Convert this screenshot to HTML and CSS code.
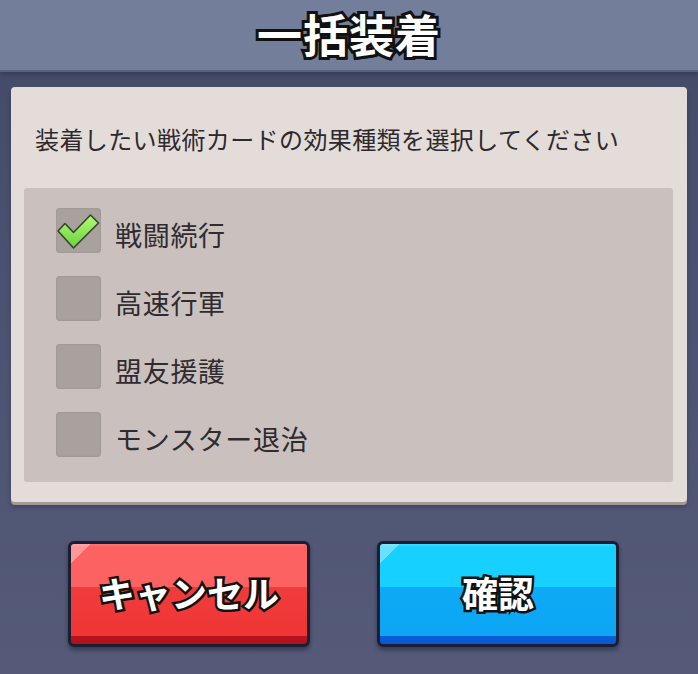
FILE: index.html
```html
<!DOCTYPE html>
<html lang="ja">
<head>
<meta charset="utf-8">
<title>一括装着</title>
<link rel="stylesheet" href="styles.css">
</head>
<body>
<div class="screen">
  <header class="header">
    <h1 class="title">一括装着</h1>
  </header>
  <section class="panel">
    <p class="desc">装着したい戦術カードの効果種類を選択してください</p>
    <div class="options">
      <div class="option">
        <span class="box">
          <svg class="check" viewBox="0 0 45 45" width="45" height="45">
            <defs>
              <linearGradient id="g" x1="0" y1="0" x2="0" y2="1">
                <stop offset="0" stop-color="#b4fa78"/>
                <stop offset="1" stop-color="#68d23c"/>
              </linearGradient>
            </defs>
            <polygon points="2,23 9,15.5 17.5,24.5 34.5,7 42.5,15 17.5,40" fill="url(#g)" stroke="#34452a" stroke-width="1.6" stroke-linejoin="round"/>
          </svg>
        </span>
        <span class="label">戦闘続行</span>
      </div>
      <div class="option">
        <span class="box"></span>
        <span class="label">高速行軍</span>
      </div>
      <div class="option">
        <span class="box"></span>
        <span class="label">盟友援護</span>
      </div>
      <div class="option">
        <span class="box"></span>
        <span class="label">モンスター退治</span>
      </div>
    </div>
  </section>
  <div class="actions">
    <button class="btn btn-cancel"><span class="btn-text">キャンセル</span></button>
    <button class="btn btn-ok"><span class="btn-text">確認</span></button>
  </div>
</div>
</body>
</html>
```

FILE: styles.css
```css
* { box-sizing: border-box; }
html, body {
  margin: 0;
  padding: 0;
}
body {
  width: 698px;
  height: 674px;
  overflow: hidden;
  font-family: "Noto Sans CJK JP", "Noto Sans", sans-serif;
  background: linear-gradient(180deg, #434a67 0%, #4b5271 40%, #545a77 100%);
}
.screen {
  width: 698px;
  height: 674px;
  display: flex;
  flex-direction: column;
}
.header {
  height: 70px;
  background: #737e9b;
  display: flex;
  justify-content: center;
  align-items: center;
  box-shadow: 0 2px 0 #59617e, 0 5px 4px rgba(40, 44, 66, 0.45);
  position: relative;
  z-index: 1;
}
.title {
  margin: 0;
  font-size: 45px;
  font-weight: 700;
  line-height: 1;
  color: #fff;
  letter-spacing: 1px;
  -webkit-text-stroke: 6px #111;
  paint-order: stroke fill;
  text-shadow: 0 3px 0 #111;
  padding-bottom: 4px;
}
.panel {
  margin: 17px 11px 0 11px;
  height: 415px;
  background: #e3dcd9;
  border-radius: 4px;
  box-shadow: 0 3px 0 #a19995, 0 5px 4px rgba(30, 32, 50, 0.35);
  padding: 37px 14px 0 13px;
}
.desc {
  margin: 0 0 0 11px;
  font-size: 24px;
  letter-spacing: 0.4px;
  line-height: 30px;
  height: 30px;
  color: #2d292d;
  white-space: nowrap;
}
.options {
  margin-top: 34px;
  height: 294px;
  background: #cac1be;
  border-radius: 3px;
  padding: 20px 0 0 32px;
  display: flex;
  flex-direction: column;
  gap: 23px;
}
.option {
  display: flex;
  align-items: center;
  height: 45px;
}
.box {
  width: 45px;
  height: 45px;
  flex: none;
  border-radius: 4px;
  background: #a9a19e;
  box-shadow: inset 0 0 2px rgba(0, 0, 0, 0.15);
  display: block;
}
.check {
  display: block;
}
.label {
  margin-left: 14px;
  font-size: 27px;
  letter-spacing: 0.7px;
  line-height: 1;
  padding-top: 8px;
  color: #2f2b30;
  white-space: nowrap;
}
.actions {
  margin-top: 39px;
  padding-left: 68px;
  display: flex;
  gap: 67px;
}
.btn {
  width: 242px;
  height: 106px;
  border: 3px solid #1b1e33;
  border-radius: 6px;
  padding: 0 0 4px 0;
  display: flex;
  justify-content: center;
  align-items: center;
  box-shadow: 0 3px 4px rgba(20, 22, 40, 0.45);
  font-family: inherit;
  cursor: pointer;
}
.btn-cancel {
  background:
    linear-gradient(135deg, rgba(255, 255, 255, 0.35) 0, rgba(255, 255, 255, 0.35) 14px, rgba(255, 255, 255, 0) 14px),
    linear-gradient(180deg, #ff7474 0, #fd6262 3px, #fd6262 43px, #f13c3c 43px, #ef3535 calc(100% - 8px), #b5141f calc(100% - 8px), #ae121d 100%);
}
.btn-ok {
  background:
    linear-gradient(135deg, rgba(255, 255, 255, 0.35) 0, rgba(255, 255, 255, 0.35) 14px, rgba(255, 255, 255, 0) 14px),
    linear-gradient(180deg, #3edcff 0, #16d1ff 3px, #16d1ff 43px, #0eaaf6 43px, #0ca6f4 calc(100% - 8px), #0a5dd6 calc(100% - 8px), #0957d0 100%);
}
.btn-text {
  font-size: 36px;
  font-weight: 700;
  line-height: 1;
  color: #fff;
  -webkit-text-stroke: 5px #111;
  paint-order: stroke fill;
  text-shadow: 0 2px 0 #111;
  white-space: nowrap;
}
```
